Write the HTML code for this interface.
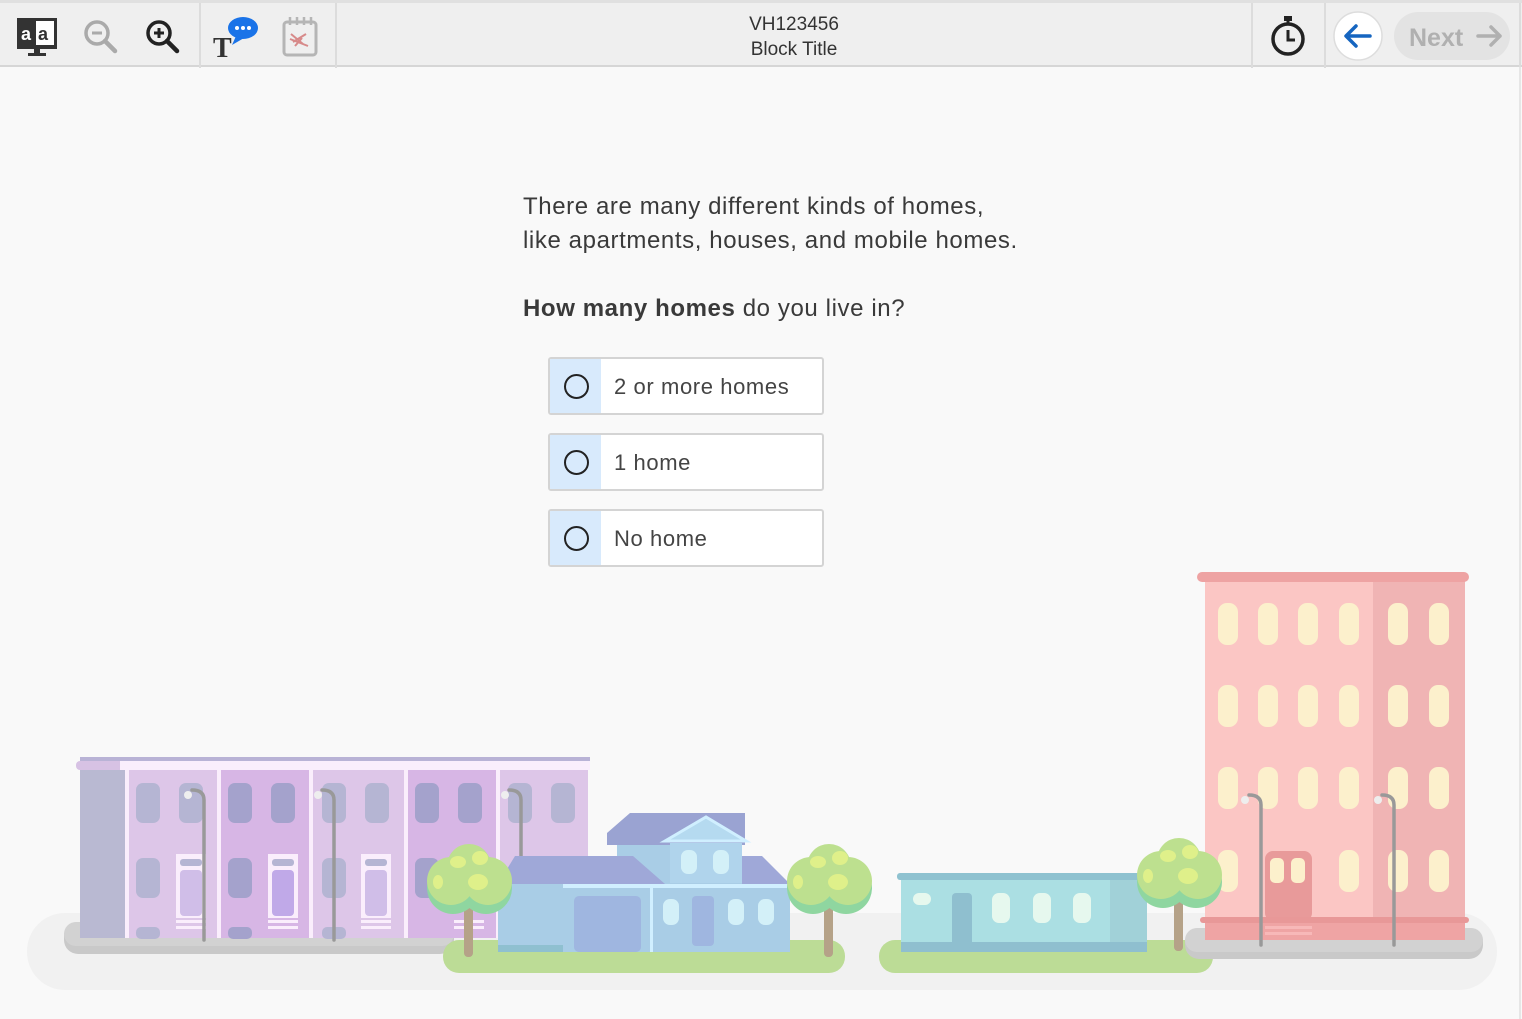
<!DOCTYPE html>
<html><head><meta charset="utf-8"><style>
*{margin:0;padding:0;box-sizing:border-box}
body{width:1522px;height:1019px;background:#f9f9f9;font-family:"Liberation Sans",sans-serif;position:relative;overflow:hidden;color:#333}
.tb{position:absolute;left:0;top:0;width:1522px;height:67px;background:#efefef;border-top:3px solid #e0e0e0;border-bottom:2px solid #d6d6d6}
.sep{position:absolute;top:0;width:2px;height:65px;background:#dcdcdc}
.t{position:absolute;font-size:24px;color:#3a3a3a;letter-spacing:0.6px}
.opt{position:absolute;left:548px;width:276px;height:58px;border:2px solid #d4d4d4;border-radius:3px;background:#fff;overflow:hidden}
.opt .l{position:absolute;left:0;top:0;width:51px;height:100%;background:#d8eafc}
.opt .c{position:absolute;left:14px;top:15px;width:25px;height:25px;border:2px solid #222;border-radius:50%}
.opt span{position:absolute;left:64px;top:15px;font-size:22px;color:#444;letter-spacing:0.6px}
</style></head><body>
<div class="tb">
 <div class="sep" style="left:199px"></div>
 <div class="sep" style="left:335px"></div>
 <div class="sep" style="left:1251px"></div>
 <div class="sep" style="left:1324px"></div>
 <div class="sep" style="left:1519px"></div>
 <svg style="position:absolute;left:0;top:-3px" width="400" height="67">
  <rect x="17" y="18" width="40" height="31" fill="#333"/>
  <rect x="36" y="21" width="18" height="24" fill="#fff"/>
  <text x="21" y="40" font-size="18" font-family="Liberation Sans" font-weight="bold" fill="#fff">a</text>
  <text x="38" y="40" font-size="18" font-family="Liberation Sans" font-weight="bold" fill="#333">a</text>
  <rect x="34" y="49" width="6" height="5" fill="#333"/><rect x="28" y="53" width="18" height="3" fill="#333"/>
  <circle cx="97" cy="33" r="11" fill="none" stroke="#aaa" stroke-width="3.5"/><line x1="92" y1="33" x2="102" y2="33" stroke="#aaa" stroke-width="3"/><line x1="105" y1="41" x2="115" y2="51" stroke="#aaa" stroke-width="4.5" stroke-linecap="round"/>
  <circle cx="159" cy="33" r="11" fill="none" stroke="#222" stroke-width="3.5"/><line x1="154" y1="33" x2="164" y2="33" stroke="#222" stroke-width="3"/><line x1="159" y1="28" x2="159" y2="38" stroke="#222" stroke-width="3"/><line x1="167" y1="41" x2="177" y2="51" stroke="#222" stroke-width="4.5" stroke-linecap="round"/>
  <text x="213" y="57" font-size="28" font-family="Liberation Serif" font-weight="bold" fill="#333">T</text>
  <ellipse cx="243" cy="28" rx="15" ry="11" fill="#1a73e8"/><path d="M236 36 L232 45 L244 38Z" fill="#1a73e8"/>
  <circle cx="237" cy="28" r="2" fill="#fff"/><circle cx="243" cy="28" r="2" fill="#fff"/><circle cx="249" cy="28" r="2" fill="#fff"/>
  <rect x="284" y="22" width="32" height="33" rx="3" fill="none" stroke="#b5b5b5" stroke-width="3"/>
  <line x1="290" y1="17" x2="290" y2="25" stroke="#b5b5b5" stroke-width="2.5"/><line x1="297" y1="17" x2="297" y2="25" stroke="#b5b5b5" stroke-width="2.5"/><line x1="304" y1="17" x2="304" y2="25" stroke="#b5b5b5" stroke-width="2.5"/><line x1="311" y1="17" x2="311" y2="25" stroke="#b5b5b5" stroke-width="2.5"/>
  <path d="M291 34 L303 44 M293 42 L306 34 M290 39 L308 46 M295 46 L302 38" stroke="#d78a8a" stroke-width="2"/>
 </svg>
 <div style="position:absolute;left:700px;top:9px;width:188px;text-align:center;font-size:19px;line-height:25px;color:#333">VH123456<br>Block Title</div>
 <svg style="position:absolute;left:1252px;top:-3px" width="270" height="67">
  <circle cx="36" cy="39" r="15" fill="none" stroke="#222" stroke-width="3.5"/>
  <rect x="32" y="16" width="8" height="5" fill="#222"/><line x1="36" y1="20" x2="36" y2="24" stroke="#222" stroke-width="3"/>
  <path d="M36 30 V40 H43" fill="none" stroke="#222" stroke-width="3"/>
  <circle cx="106" cy="36" r="24" fill="#fff" stroke="#ddd" stroke-width="1.5"/>
  <path d="M118 36 H95 M104 26 L94 36 L104 46" fill="none" stroke="#1565c0" stroke-width="3.5" stroke-linecap="round" stroke-linejoin="round"/>
  <rect x="142" y="12" width="116" height="48" rx="24" fill="#e3e3e3"/>
  <text x="157" y="46" font-size="25" font-family="Liberation Sans" font-weight="bold" fill="#b0b0b0">Next</text>
  <path d="M226 36 H248 M239 27 L248 36 L239 45" fill="none" stroke="#b0b0b0" stroke-width="3.5" stroke-linecap="round" stroke-linejoin="round"/>
 </svg>
</div>
<div style="position:absolute;left:1519px;top:67px;width:2px;height:952px;background:#e6e6e6"></div>
<div class="t" style="left:523px;top:193px">There are many different kinds of homes,</div>
<div class="t" style="left:523px;top:227px">like apartments, houses, and mobile homes.</div>
<div class="t" style="left:523px;top:295px"><b>How many homes</b> do you live in?</div>
<div class="opt" style="top:357px"><div class="l"></div><div class="c"></div><span>2 or more homes</span></div>
<div class="opt" style="top:433px"><div class="l"></div><div class="c"></div><span>1 home</span></div>
<div class="opt" style="top:509px"><div class="l"></div><div class="c"></div><span>No home</span></div>

<svg style="position:absolute;left:0;top:0" width="1522" height="1019">
 <rect x="27" y="913" width="1470" height="77" rx="38" fill="#f1f1f1"/>
 <rect x="64" y="922" width="390" height="32" rx="14" fill="#c9c9c9"/>
 <rect x="64" y="922" width="390" height="24" rx="12" fill="#d2d2d2"/>
 <rect x="80" y="760" width="46" height="178" fill="#b9b9d2"/>
 <rect x="126" y="766" width="93" height="172" fill="#ddc6e8"/>
 <rect x="219" y="766" width="92" height="172" fill="#d7b6e5"/>
 <rect x="311" y="766" width="95" height="172" fill="#ddc6e8"/>
 <rect x="406" y="766" width="92" height="172" fill="#d7b6e5"/>
 <rect x="498" y="766" width="90" height="172" fill="#ddc6e8"/>
 <rect x="80" y="757" width="510" height="5" fill="#b9b3d6"/>
 <rect x="76" y="761" width="50" height="9" rx="4" fill="#d7c2e4"/>
 <rect x="120" y="761" width="470" height="9" fill="#faeefc"/>
 <g fill="#faeefc"><rect x="125" y="770" width="4" height="168"/><rect x="217" y="770" width="4" height="168"/><rect x="309" y="770" width="4" height="168"/><rect x="404" y="770" width="4" height="168"/><rect x="496" y="770" width="4" height="168"/></g>
 <g fill="#b5b5d3">
  <rect x="136" y="783" width="24" height="40" rx="7"/><rect x="179" y="783" width="24" height="40" rx="7"/>
  <rect x="228" y="783" width="24" height="40" rx="7" fill="#a4a2cc"/><rect x="271" y="783" width="24" height="40" rx="7" fill="#a4a2cc"/>
  <rect x="322" y="783" width="24" height="40" rx="7"/><rect x="365" y="783" width="24" height="40" rx="7"/>
  <rect x="415" y="783" width="24" height="40" rx="7" fill="#a4a2cc"/><rect x="458" y="783" width="24" height="40" rx="7" fill="#a4a2cc"/>
  <rect x="508" y="783" width="24" height="40" rx="7"/><rect x="551" y="783" width="24" height="40" rx="7"/>
  <rect x="136" y="858" width="24" height="40" rx="7"/><rect x="228" y="858" width="24" height="40" rx="7" fill="#a4a2cc"/><rect x="322" y="858" width="24" height="40" rx="7"/><rect x="415" y="858" width="24" height="40" rx="7" fill="#a4a2cc"/>
  <rect x="136" y="927" width="24" height="12" rx="5"/><rect x="228" y="927" width="24" height="12" rx="5" fill="#a4a2cc"/><rect x="322" y="927" width="24" height="12" rx="5"/>
 </g>
 <g>
  <rect x="176" y="854" width="30" height="64" fill="#faeefc"/><rect x="180" y="870" width="22" height="46" rx="4" fill="#d0bee8"/><rect x="180" y="859" width="22" height="7" rx="3" fill="#b5b5d3"/>
  <rect x="268" y="854" width="30" height="64" fill="#faeefc"/><rect x="272" y="870" width="22" height="46" rx="4" fill="#c0a9e8"/><rect x="272" y="859" width="22" height="7" rx="3" fill="#b5b5d3"/>
  <rect x="361" y="854" width="30" height="64" fill="#faeefc"/><rect x="365" y="870" width="22" height="46" rx="4" fill="#d0bee8"/><rect x="365" y="859" width="22" height="7" rx="3" fill="#b5b5d3"/>
  <g fill="#faeefc"><rect x="176" y="920" width="30" height="3"/><rect x="176" y="926" width="30" height="3"/><rect x="268" y="920" width="30" height="3"/><rect x="268" y="926" width="30" height="3"/><rect x="361" y="920" width="30" height="3"/><rect x="361" y="926" width="30" height="3"/><rect x="454" y="920" width="30" height="3"/><rect x="454" y="926" width="30" height="3"/></g>
 </g>
 <g fill="none" stroke="#999" stroke-width="3.5" stroke-linecap="round">
  <path d="M204 940 V800 Q204 790 192 790"/><path d="M334 940 V800 Q334 790 322 790"/><path d="M521 940 V800 Q521 790 509 790"/>
 </g>
 <g fill="#eee"><circle cx="188" cy="795" r="4"/><circle cx="318" cy="795" r="4"/><circle cx="505" cy="795" r="4"/></g>
 <rect x="443" y="940" width="402" height="33" rx="16" fill="#bcdc96"/>
 <path d="M607 833 L630 813 L745 813 L745 845 L607 845Z" fill="#9aa3d2"/>
 <rect x="617" y="845" width="125" height="40" fill="#a9cde6"/>
 <path d="M665 841 L706 817 L746 841Z" fill="#b5daf0" stroke="#d0efff" stroke-width="3"/>
 <rect x="670" y="843" width="72" height="40" fill="#b0d4ec"/>
 <rect x="681" y="850" width="16" height="24" rx="7" fill="#d3f0f8"/><rect x="713" y="850" width="16" height="24" rx="7" fill="#d3f0f8"/>
 <path d="M498 884 L515 856 L633 856 L665 884Z" fill="#9fa8d8"/>
 <path d="M742 856 L762 856 L790 884 L742 884Z" fill="#9fa8d8"/>
 <rect x="498" y="884" width="292" height="68" fill="#a9cde6"/>
 <rect x="563" y="884" width="227" height="4" fill="#d0efff"/>
 <rect x="650" y="888" width="3" height="64" fill="#d0efff"/>
 <rect x="574" y="896" width="67" height="56" rx="5" fill="#9fb6e0"/>
 <rect x="663" y="899" width="16" height="26" rx="7" fill="#d3f0f8"/><rect x="728" y="899" width="16" height="26" rx="7" fill="#d3f0f8"/><rect x="758" y="899" width="16" height="26" rx="7" fill="#d3f0f8"/>
 <rect x="692" y="896" width="22" height="50" rx="4" fill="#9fb6e0"/>
 <rect x="498" y="945" width="65" height="7" fill="#8fc0d0"/>
 <rect x="879" y="940" width="334" height="33" rx="16" fill="#bcdc96"/>
 <rect x="901" y="878" width="246" height="74" fill="#abdfe3"/>
 <rect x="1110" y="878" width="37" height="74" fill="#a1d1d8"/>
 <rect x="897" y="873" width="254" height="7" rx="3" fill="#8fc2d0"/>
 <rect x="901" y="942" width="246" height="10" fill="#8fbfcf"/>
 <rect x="952" y="893" width="20" height="55" rx="4" fill="#8fbfcf"/>
 <rect x="913" y="893" width="18" height="12" rx="6" fill="#e6f8ee"/>
 <rect x="992" y="893" width="18" height="30" rx="7" fill="#e6f8ee"/><rect x="1033" y="893" width="18" height="30" rx="7" fill="#e6f8ee"/><rect x="1073" y="893" width="18" height="30" rx="7" fill="#e6f8ee"/>
 <rect x="1185" y="928" width="298" height="31" rx="14" fill="#c9c9c9"/>
 <rect x="1185" y="928" width="298" height="24" rx="12" fill="#d2d2d2"/>
 <rect x="1205" y="578" width="168" height="362" fill="#fbc6c4"/>
 <rect x="1373" y="578" width="92" height="362" fill="#f0b4b4"/>
 <rect x="1197" y="572" width="272" height="10" rx="5" fill="#eea3a3"/>
 <g fill="#fcf0cc">
  <g id="wr"><rect x="1218" y="603" width="20" height="42" rx="9"/><rect x="1258" y="603" width="20" height="42" rx="9"/><rect x="1298" y="603" width="20" height="42" rx="9"/><rect x="1339" y="603" width="20" height="42" rx="9"/><rect x="1388" y="603" width="20" height="42" rx="9"/><rect x="1429" y="603" width="20" height="42" rx="9"/></g>
  <use href="#wr" y="82"/><use href="#wr" y="164"/>
  <rect x="1218" y="850" width="20" height="42" rx="9"/><rect x="1339" y="850" width="20" height="42" rx="9"/><rect x="1388" y="850" width="20" height="42" rx="9"/><rect x="1429" y="850" width="20" height="42" rx="9"/>
 </g>
 <rect x="1265" y="851" width="47" height="70" rx="8" fill="#e89a9a"/>
 <rect x="1270" y="858" width="14" height="25" rx="5" fill="#fcf0cc"/><rect x="1291" y="858" width="14" height="25" rx="5" fill="#fcf0cc"/>
 <rect x="1200" y="917" width="269" height="6" rx="3" fill="#e89898"/>
 <rect x="1205" y="923" width="260" height="17" fill="#efa4a4"/>
 <g fill="#f7b8b8"><rect x="1265" y="926" width="47" height="3"/><rect x="1265" y="932" width="47" height="3"/></g>
 <g fill="none" stroke="#999" stroke-width="3.5" stroke-linecap="round"><path d="M1261 945 V805 Q1261 795 1249 795"/><path d="M1394 945 V805 Q1394 795 1382 795"/></g>
 <g fill="#eee"><circle cx="1245" cy="800" r="4"/><circle cx="1378" cy="800" r="4"/></g>
 <g id="tree">
  <rect x="464" y="895" width="9" height="62" rx="4" fill="#b5a288"/>
  <circle cx="453" cy="888" r="26" fill="#8fd6a0"/><circle cx="486" cy="888" r="26" fill="#8fd6a0"/>
  <circle cx="451" cy="881" r="24" fill="#bde08f"/><circle cx="488" cy="881" r="24" fill="#bde08f"/><circle cx="469" cy="866" r="22" fill="#bde08f"/>
  <ellipse cx="458" cy="862" rx="8" ry="6" fill="#dff08a"/><ellipse cx="480" cy="858" rx="8" ry="7" fill="#dff08a"/><ellipse cx="478" cy="882" rx="10" ry="8" fill="#dff08a"/><ellipse cx="438" cy="882" rx="5" ry="7" fill="#dff08a"/>
 </g>
 <use href="#tree" x="360"/>
 <use href="#tree" x="710" y="-6"/>
</svg>
</body></html>
